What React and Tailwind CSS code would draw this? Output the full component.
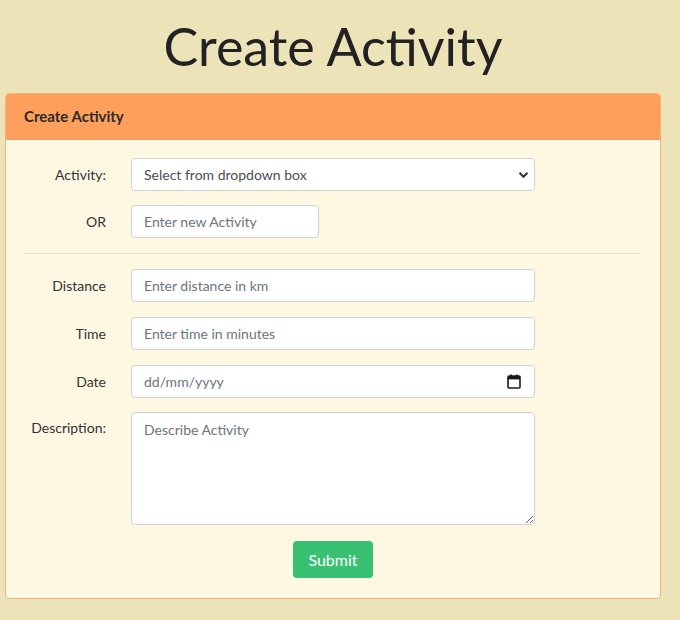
import React from 'react';

const font = { fontFamily: 'Lato, "Open Sans", sans-serif' };

const Row = ({ label, top = false, children, className = '' }) => (
  <div className={`flex ${top ? 'items-start' : 'items-center'} ${className}`}>
    <label className={`w-[81px] shrink-0 text-right text-[14px] text-[#333333] ${top ? 'pt-[5px]' : ''}`}>{label}</label>
    <div className="ml-[25px]">{children}</div>
  </div>
);

const inputCls =
  'h-[33px] rounded-[4px] border border-[#cfd1d3] bg-white px-[12px] text-[14px] text-[#495057] placeholder:text-[#6c757d] outline-none';

const CalendarIcon = () => (
  <svg width="14" height="15" viewBox="0 0 14 15" className="text-[#1a1a1a]">
    <rect x="1" y="2" width="12" height="12" rx="1" fill="none" stroke="currentColor" strokeWidth="1.6" />
    <rect x="1" y="2" width="12" height="3.4" fill="currentColor" />
    <rect x="3.3" y="0.5" width="1.6" height="2.5" fill="currentColor" />
    <rect x="9.1" y="0.5" width="1.6" height="2.5" fill="currentColor" />
  </svg>
);

export default function App() {
  return (
    <div className="min-h-[620px] w-[680px] bg-[#ece3b8] pb-[22px]" style={font}>
      <h1 className="pr-[14px] pt-[10px] pb-[10px] text-center text-[52px] leading-[73px] text-[#222222]">
        Create Activity
      </h1>

      <div className="ml-[5px] w-[656px] overflow-hidden rounded-[4px] border border-[#f2b27a] bg-[#fef8e2]">
        <div className="flex h-[46px] items-center border-b border-[#eba06a] bg-[#fe9f5c] px-[18px]">
          <span className="text-[15px] font-bold text-[#2a2a2a]">Create Activity</span>
        </div>

        <div className="px-[19px] pt-[18px] pb-[20px]">
          <Row label="Activity:">
            <div className="relative">
              <select
                className={`${inputCls} w-[404px] appearance-none text-[#3a3f44]`}
                defaultValue=""
              >
                <option value="">Select from dropdown box</option>
              </select>
              <svg
                width="11"
                height="8"
                viewBox="0 0 11 8"
                className="pointer-events-none absolute right-[6px] top-[13px]"
              >
                <path d="M1.5 1.8 5.5 5.8 9.5 1.8" fill="none" stroke="#333" strokeWidth="2" />
              </svg>
            </div>
          </Row>

          <Row label="OR" className="mt-[14px]">
            <input className={`${inputCls} w-[188px]`} placeholder="Enter new Activity" />
          </Row>

          <hr className="mt-[15px] mb-[15px] border-t border-[#e6dfc6]" />

          <Row label="Distance">
            <input className={`${inputCls} w-[404px]`} placeholder="Enter distance in km" />
          </Row>

          <Row label="Time" className="mt-[15px]">
            <input className={`${inputCls} w-[404px]`} placeholder="Enter time in minutes" />
          </Row>

          <Row label="Date" className="mt-[15px]">
            <div className="relative">
              <input
                className={`${inputCls} w-[404px] placeholder:text-[#3a3f44]`}
                placeholder="dd/mm/yyyy"
              />
              <div className="pointer-events-none absolute right-[14px] top-[9px]">
                <CalendarIcon />
              </div>
            </div>
          </Row>

          <Row label="Description:" top className="mt-[14px]">
            <textarea
              className="block h-[113px] w-[404px] rounded-[4px] border border-[#cfd1d3] bg-white px-[12px] py-[6px] text-[14px] text-[#495057] placeholder:text-[#6c757d] outline-none"
              placeholder="Describe Activity"
            />
          </Row>

          <div className="mt-[16px] flex justify-center">
            <button className="h-[37px] w-[80px] rounded-[4px] bg-[#38c172] text-[16px] text-white">
              Submit
            </button>
          </div>
        </div>
      </div>
    </div>
  );
}
